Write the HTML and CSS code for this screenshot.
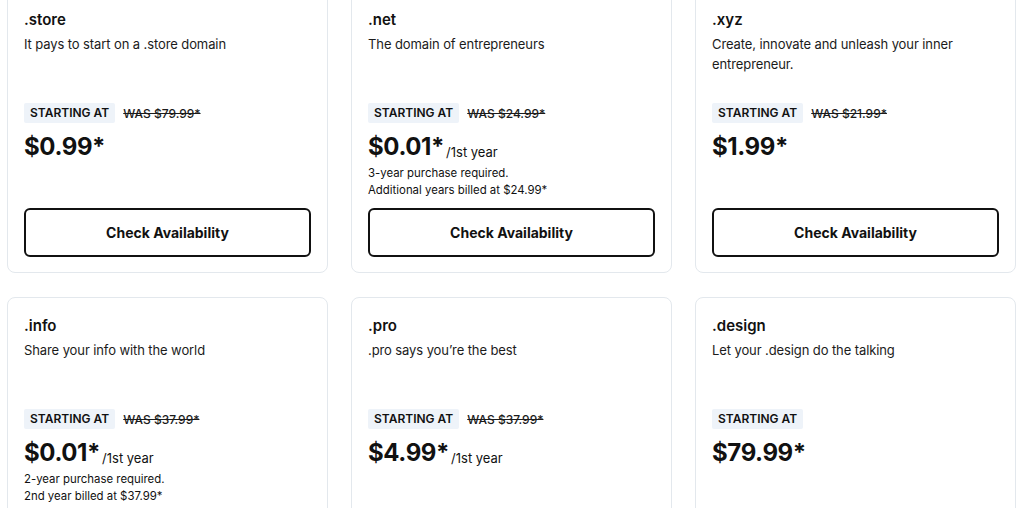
FILE: index.html
```html
<!DOCTYPE html>
<html lang="en">
<head>
<meta charset="utf-8">
<title>Domains</title>
<link rel="stylesheet" href="styles.css">
</head>
<body>
<main class="grid">
  <section class="card">
    <h3 class="tld">.store</h3>
    <p class="desc">It pays to start on a .store domain</p>
    <div class="pricing">
      <div class="labels"><span class="badge">STARTING AT</span><s class="was">WAS $79.99*</s></div>
      <div class="price"><span class="amount">$0.99*</span></div>
    </div>
    <button class="btn">Check Availability</button>
  </section>
  <section class="card">
    <h3 class="tld">.net</h3>
    <p class="desc">The domain of entrepreneurs</p>
    <div class="pricing">
      <div class="labels"><span class="badge">STARTING AT</span><s class="was">WAS $24.99*</s></div>
      <div class="price"><span class="amount">$0.01*</span><span class="term">/1st year</span></div>
      <p class="fine first">3-year purchase required.</p>
      <p class="fine">Additional years billed at $24.99*</p>
    </div>
    <button class="btn">Check Availability</button>
  </section>
  <section class="card">
    <h3 class="tld">.xyz</h3>
    <p class="desc">Create, innovate and unleash your inner entrepreneur.</p>
    <div class="pricing">
      <div class="labels"><span class="badge">STARTING AT</span><s class="was">WAS $21.99*</s></div>
      <div class="price"><span class="amount">$1.99*</span></div>
    </div>
    <button class="btn">Check Availability</button>
  </section>
  <section class="card">
    <h3 class="tld">.info</h3>
    <p class="desc">Share your info with the world</p>
    <div class="pricing">
      <div class="labels"><span class="badge">STARTING AT</span><s class="was">WAS $37.99*</s></div>
      <div class="price"><span class="amount">$0.01*</span><span class="term">/1st year</span></div>
      <p class="fine first">2-year purchase required.</p>
      <p class="fine">2nd year billed at $37.99*</p>
    </div>
    <button class="btn">Check Availability</button>
  </section>
  <section class="card">
    <h3 class="tld">.pro</h3>
    <p class="desc">.pro says you’re the best</p>
    <div class="pricing">
      <div class="labels"><span class="badge">STARTING AT</span><s class="was">WAS $37.99*</s></div>
      <div class="price"><span class="amount">$4.99*</span><span class="term">/1st year</span></div>
    </div>
    <button class="btn">Check Availability</button>
  </section>
  <section class="card">
    <h3 class="tld">.design</h3>
    <p class="desc">Let your .design do the talking</p>
    <div class="pricing">
      <div class="labels"><span class="badge">STARTING AT</span></div>
      <div class="price"><span class="amount">$79.99*</span></div>
    </div>
    <button class="btn">Check Availability</button>
  </section>
</main>
</body>
</html>
```
FILE: styles.css
```css
* { box-sizing: border-box; }
html, body { margin: 0; padding: 0; background: #fff; }
body {
  font-family: Inter, "Noto Sans", "Liberation Sans", sans-serif;
  color: #111111;
  overflow: hidden;
  height: 508px;
}
.grid {
  display: grid;
  grid-template-columns: repeat(3, 321px);
  column-gap: 23px;
  row-gap: 24px;
  padding-left: 7px;
  margin-top: -9px;
}
.card {
  display: flex;
  flex-direction: column;
  border: 1px solid #e3e8ed;
  border-radius: 8px;
  padding: 16px 16px 15px;
  background: #fff;
}
.tld {
  margin: 0;
  font-size: 15px;
  line-height: 24px;
  font-weight: 600;
}
.desc {
  margin: 2px 0 0;
  font-size: 13px;
  line-height: 20px;
  min-height: 60px;
  padding-right: 20px;
  color: #1b1b1b;
  letter-spacing: -0.1px;
}
.pricing {
  margin-top: 9px;
  margin-bottom: 9px;
}
.labels {
  display: flex;
  align-items: center;
  gap: 8px;
  height: 20px;
}
.badge {
  background: #eef3f9;
  font-size: 12px;
  font-weight: 600;
  line-height: 20px;
  padding: 0 6px;
  border-radius: 2px;
}
.was {
  font-size: 12px;
  font-weight: 500;
  color: #1b1b1b;
}
.price {
  margin-top: 10px;
  display: flex;
  align-items: baseline;
  gap: 2px;
  line-height: 28px;
}
.amount {
  font-size: 24px;
  font-weight: 700;
  letter-spacing: -0.4px;
}
.term {
  font-size: 13px;
  position: relative;
  top: 2px;
}
.fine {
  margin: 0;
  font-size: 11.4px;
  line-height: 17px;
}
.fine.first { margin-top: 1px; }
.btn {
  margin-top: auto;
  height: 49px;
  width: 100%;
  border: 2px solid #111;
  border-radius: 6px;
  background: #fff;
  font-family: inherit;
  font-size: 14px;
  font-weight: 700;
  color: #111;
  cursor: pointer;
}
```
